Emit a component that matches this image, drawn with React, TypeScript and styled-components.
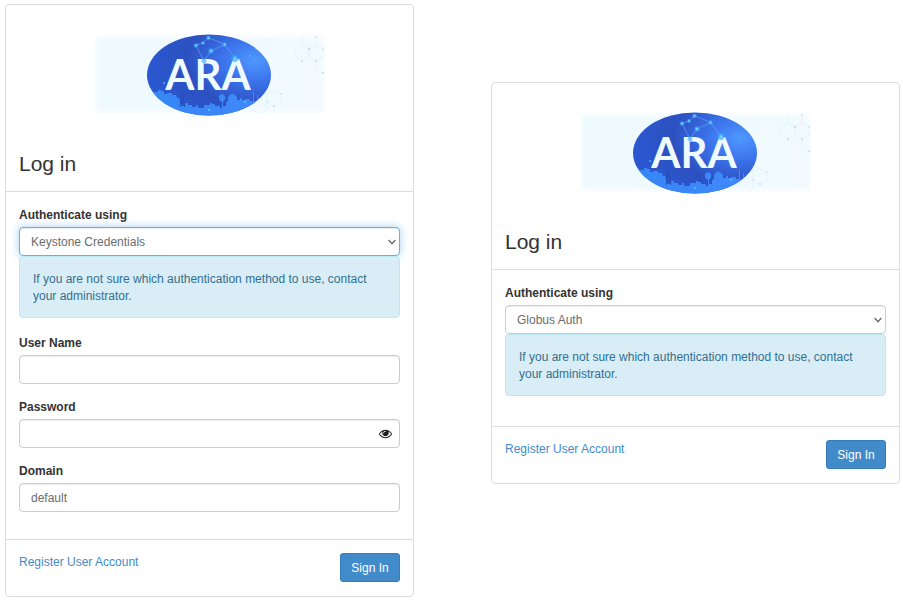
import { useId, useState } from "react";
import styled, { createGlobalStyle, css } from "styled-components";

const GlobalStyle = createGlobalStyle`
  *, *::before, *::after { box-sizing: border-box; }
  body {
    margin: 0;
    background: #fff;
    color: #333;
    font-family: "Liberation Sans", Arial, sans-serif;
    font-size: 12px;
    line-height: 17px;
  }
`;

const Page = styled.main`
  display: grid;
  grid-template-columns: 1fr 1fr;
  align-items: start;
  gap: 77px;
  padding: 4px 3px 5px 5px;
`;

const Card = styled.form<{ $lowered?: boolean }>`
  margin-top: ${(p) => (p.$lowered ? "78px" : "0")};
  background: #fff;
  border: 1px solid #ddd;
  border-radius: 4px;
`;

const CardHeader = styled.header`
  padding: 20px 13px 14px;
  border-bottom: 1px solid #ddd;
`;

const Logo = styled.svg`
  display: block;
  width: 240px;
  height: 100px;
  margin: 0 auto;
`;

const Title = styled.h1`
  margin: 26px 0 0;
  font-size: 21px;
  line-height: 26px;
  font-weight: 500;
`;

const CardBody = styled.div`
  display: flex;
  flex-direction: column;
  gap: 15px;
  padding: 15px 13px 27px;
`;

const MethodBody = styled(CardBody)`
  padding-bottom: 28px;
`;

const Field = styled.div`
  display: flex;
  flex-direction: column;
`;

const Label = styled.label`
  margin-bottom: 3px;
  font-weight: 700;
`;

const control = css`
  width: 100%;
  height: 29px;
  padding: 1px 11px 0;
  border: 1px solid #ccc;
  border-radius: 4px;
  background: #fff;
  box-shadow: inset 0 1px 1px rgba(0, 0, 0, 0.075);
  color: #6c6c6c;
  font: inherit;
  outline: none;
`;

const Input = styled.input`
  ${control}
`;

const SelectWrap = styled.div`
  display: grid;
  align-items: center;
`;

const Select = styled.select<{ $active?: boolean }>`
  ${control}
  grid-area: 1 / 1;
  appearance: none;
  ${(p) =>
    p.$active &&
    css`
      border-color: #66afe9;
      box-shadow: inset 0 1px 1px rgba(0, 0, 0, 0.075), 0 0 8px rgba(102, 175, 233, 0.6);
    `}
`;

const Chevron = styled.svg`
  grid-area: 1 / 1;
  justify-self: end;
  width: 8px;
  height: 6px;
  margin-right: 4px;
  pointer-events: none;
`;

const PasswordWrap = styled.div`
  display: grid;
  align-items: center;

  & > * {
    grid-area: 1 / 1;
  }
`;

const RevealButton = styled.button`
  display: flex;
  justify-self: end;
  margin-right: 8px;
  padding: 0;
  border: 0;
  background: none;
  color: #222;
`;

const EyeIcon = styled.svg`
  width: 13px;
  height: 13px;
  fill: currentColor;
`;

const Hint = styled.p`
  margin: 0 0 2px;
  padding: 14px 13px 12px;
  border: 1px solid #bce8f1;
  border-radius: 4px;
  background: #d9edf7;
  color: #31708f;
`;

const CardFooter = styled.footer`
  display: flex;
  align-items: flex-start;
  justify-content: space-between;
  padding: 13px 13px 14px;
  border-top: 1px solid #ddd;
`;

const RegisterLink = styled.a`
  margin-top: 1px;
  color: #428bca;
  text-decoration: none;
`;

const SignIn = styled.button`
  height: 29px;
  width: 60px;
  padding: 1px 0 0;
  border: 1px solid #357ebd;
  border-radius: 3px;
  background: #428bca;
  color: #fff;
  font: inherit;
`;

const HEXAGONS = [
  [212, 28],
  [226, 28],
  [219, 16],
  [233, 40],
  [184, 73],
  [170, 81],
];

function AraLogo() {
  const id = useId();
  return (
    <Logo viewBox="0 0 240 100" role="img" aria-label="ARA">
      <defs>
        <radialGradient id={`${id}-sky`} cx="0.87" cy="0.32" r="0.85">
          <stop offset="0" stopColor="#4f98ff" />
          <stop offset="0.3" stopColor="#3c74ec" />
          <stop offset="0.65" stopColor="#2c50c0" />
          <stop offset="1" stopColor="#2b58d0" />
        </radialGradient>
        <radialGradient id={`${id}-glow`}>
          <stop offset="0" stopColor="#9be4ff" />
          <stop offset="0.4" stopColor="#45b4ff" stopOpacity="0.9" />
          <stop offset="1" stopColor="#3a8cff" stopOpacity="0" />
        </radialGradient>
        <linearGradient id={`${id}-city`} x1="0" x2="1">
          <stop offset="0" stopColor="#3586f6" />
          <stop offset="1" stopColor="#4288fa" />
        </linearGradient>
        <linearGradient id={`${id}-panel`} x1="0" x2="1">
          <stop offset="0" stopColor="#effaff" />
          <stop offset="0.7" stopColor="#effaff" />
          <stop offset="1" stopColor="#f3faff" />
        </linearGradient>
        <filter id={`${id}-soft`} x="-5%" y="-10%" width="110%" height="120%">
          <feGaussianBlur stdDeviation="2" />
        </filter>
        <clipPath id={`${id}-edge`}>
          <rect x="6" y="10" width="228" height="78" />
        </clipPath>
        <clipPath id={`${id}-oval`}>
          <ellipse cx="119" cy="50" rx="62" ry="40.500" />
        </clipPath>
      </defs>
      <rect x="6" y="12" width="228" height="75" fill={`url(#${id}-panel)`} filter={`url(#${id}-soft)`} />
      <g clipPath={`url(#${id}-edge)`}>
        <g fill="none" stroke="#dceff9" strokeWidth="0.5">
          {HEXAGONS.map(([x, y]) => (
            <path key={`${x}-${y}`} d={`M${x - 7} ${y - 4}l7-4l7 4v8l-7 4l-7-4z`} />
          ))}
        </g>
        <g fill="#b2dcf0">
          {HEXAGONS.map(([x, y]) => (
            <g key={`${x}-${y}`}>
              <circle cx={x} cy={y + 8} r="0.9" />
              <circle cx={x + 7} cy={y - 4} r="0.8" />
            </g>
          ))}
        </g>
      </g>
      <g clipPath={`url(#${id}-oval)`}>
        <rect x="57" y="9" width="124" height="82" fill={`url(#${id}-sky)`} />
        <path
          fill={`url(#${id}-city)`}
          d="M57 67h11v-2h3v1h3v3h3v-1h5v2h4l1 3h2l2 8h4v-3h3v2h4v2h4v-2h2v3h6v-3h6v-2h2v1h3v2h5v2h2v-6q-4-2-3-6q3-4 6 0q1 4-2 6v4h3v-4l2-1v-4q4-7 9 0v3h3v-2h2v2h3v-1h5v2h3v-9h1v9h3v-6h1v6h12v22H57z"
        />
        <path
          d="M90 82l2-14l3 14M91 73h3M90 78h4"
          fill="none"
          stroke="#234eb1"
          strokeWidth="0.8"
        />
        <path
          fill="none"
          stroke="#6caaff"
          strokeWidth="0.6"
          d="M118.500 12.500L113 18L106 20.500L114 36L121 26L134.500 19.500L118.500 12.500M134.500 19.500L145 33.500"
        />
        <g fill={`url(#${id}-glow)`}>
          <circle cx="118.500" cy="13" r="3" />
          <circle cx="113" cy="18" r="2.500" />
          <circle cx="106" cy="20.500" r="3" />
          <circle cx="121" cy="26" r="3.500" />
          <circle cx="134.500" cy="19.500" r="3" />
          <circle cx="160" cy="31" r="1.500" />
          <circle cx="74" cy="58" r="1.500" />
          <circle cx="119" cy="85" r="2" />
          <circle cx="155" cy="77" r="2" />
        </g>
      </g>
      <text
        x="118"
        y="65"
        textAnchor="middle"
        fill="#effbff"
        fontFamily="Lato, sans-serif"
        fontWeight="700"
        fontSize="42"
      >
        ARA
      </text>
      <g fill={`url(#${id}-glow)`}>
        <circle cx="114" cy="36" r="3" />
        <circle cx="145" cy="33.500" r="4.500" />
      </g>
    </Logo>
  );
}

type MethodFieldProps = {
  initial: string;
  active?: boolean;
};

function MethodField({ initial, active }: MethodFieldProps) {
  const id = useId();
  return (
    <Field>
      <Label htmlFor={id}>Authenticate using</Label>
      <SelectWrap>
        <Select id={id} defaultValue={initial} $active={active}>
          <option>Keystone Credentials</option>
          <option>Globus Auth</option>
        </Select>
        <Chevron viewBox="0 0 8 6" aria-hidden="true">
          <path d="M0.700 1l3.300 3.700l3.300-3.700" fill="none" stroke="#666" strokeWidth="1.300" />
        </Chevron>
      </SelectWrap>
      <Hint>If you are not sure which authentication method to use, contact your administrator.</Hint>
    </Field>
  );
}

function Header() {
  return (
    <CardHeader>
      <AraLogo />
      <Title>Log in</Title>
    </CardHeader>
  );
}

function Footer() {
  return (
    <CardFooter>
      <RegisterLink href="#register">Register User Account</RegisterLink>
      <SignIn type="submit">Sign In</SignIn>
    </CardFooter>
  );
}

export default function App() {
  const id = useId();
  const [visible, setVisible] = useState(false);

  return (
    <>
      <GlobalStyle />
      <Page>
        <Card onSubmit={(e) => e.preventDefault()}>
          <Header />
          <CardBody>
            <MethodField initial="Keystone Credentials" active />
            <Field>
              <Label htmlFor={`${id}-user`}>User Name</Label>
              <Input id={`${id}-user`} type="text" />
            </Field>
            <Field>
              <Label htmlFor={`${id}-password`}>Password</Label>
              <PasswordWrap>
                <Input id={`${id}-password`} type={visible ? "text" : "password"} />
                <RevealButton type="button" aria-label="Show password" onClick={() => setVisible(!visible)}>
                  <EyeIcon viewBox="0 0 1792 1792" aria-hidden="true">
                    <path d="M1664 960q-152-236-381-353 61 104 61 225 0 185-131.500 316.500t-316.500 131.500-316.500-131.500-131.500-316.500q0-121 61-225-229 117-381 353 133 205 333.500 326.500t434.500 121.500 434.500-121.500 333.500-326.500zm-720-384q0-20-14-34t-34-14q-125 0-214.500 89.500t-89.500 214.500q0 20 14 34t34 14 34-14 14-34q0-86 61-147t147-61q20 0 34-14t14-34zm848 384q0 34-20 69-140 230-376.500 368.500t-499.500 138.500-499.500-139-376.500-368q-20-35-20-69t20-69q140-229 376.500-368t499.500-139 499.500 139 376.500 368q20 35 20 69z" />
                  </EyeIcon>
                </RevealButton>
              </PasswordWrap>
            </Field>
            <Field>
              <Label htmlFor={`${id}-domain`}>Domain</Label>
              <Input id={`${id}-domain`} type="text" defaultValue="default" />
            </Field>
          </CardBody>
          <Footer />
        </Card>
        <Card $lowered onSubmit={(e) => e.preventDefault()}>
          <Header />
          <MethodBody>
            <MethodField initial="Globus Auth" />
          </MethodBody>
          <Footer />
        </Card>
      </Page>
    </>
  );
}
